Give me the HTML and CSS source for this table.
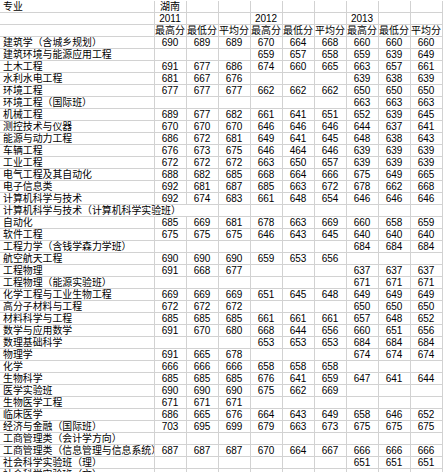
FILE: index.html
```html
<!DOCTYPE html>
<html lang="zh">
<head>
<meta charset="utf-8">
<title>录取分数</title>
<link rel="stylesheet" href="styles.css">
</head>
<body>
<table class="grid">
<colgroup>
<col class="c-name"><col class="c-num"><col class="c-num"><col class="c-num"><col class="c-num"><col class="c-num"><col class="c-num"><col class="c-num"><col class="c-num"><col class="c-num">
</colgroup>
<tbody>
<tr><td class="name">专业</td><td>湖南</td><td></td><td></td><td></td><td></td><td></td><td></td><td></td><td></td></tr>
<tr><td class="name"></td><td>2011</td><td></td><td></td><td>2012</td><td></td><td></td><td>2013</td><td></td><td></td></tr>
<tr><td class="name"></td><td>最高分</td><td>最低分</td><td>平均分</td><td>最高分</td><td>最低分</td><td>平均分</td><td>最高分</td><td>最低分</td><td>平均分</td></tr>
<tr><td class="name">建筑学（含城乡规划）</td><td>690</td><td>689</td><td>689</td><td>670</td><td>664</td><td>668</td><td>660</td><td>660</td><td>660</td></tr>
<tr><td class="name">建筑环境与能源应用工程</td><td></td><td></td><td></td><td>659</td><td>657</td><td>658</td><td>659</td><td>639</td><td>649</td></tr>
<tr><td class="name">土木工程</td><td>691</td><td>677</td><td>686</td><td>674</td><td>660</td><td>665</td><td>663</td><td>657</td><td>661</td></tr>
<tr><td class="name">水利水电工程</td><td>681</td><td>667</td><td>676</td><td></td><td></td><td></td><td>639</td><td>638</td><td>639</td></tr>
<tr><td class="name">环境工程</td><td>677</td><td>677</td><td>677</td><td>662</td><td>662</td><td>662</td><td>650</td><td>650</td><td>650</td></tr>
<tr><td class="name">环境工程（国际班）</td><td></td><td></td><td></td><td></td><td></td><td></td><td>663</td><td>663</td><td>663</td></tr>
<tr><td class="name">机械工程</td><td>689</td><td>677</td><td>682</td><td>661</td><td>641</td><td>651</td><td>652</td><td>639</td><td>645</td></tr>
<tr><td class="name">测控技术与仪器</td><td>670</td><td>670</td><td>670</td><td>646</td><td>646</td><td>646</td><td>644</td><td>637</td><td>641</td></tr>
<tr><td class="name">能源与动力工程</td><td>686</td><td>672</td><td>681</td><td>649</td><td>641</td><td>645</td><td>648</td><td>638</td><td>643</td></tr>
<tr><td class="name">车辆工程</td><td>676</td><td>673</td><td>675</td><td>646</td><td>464</td><td>646</td><td>639</td><td>639</td><td>639</td></tr>
<tr><td class="name">工业工程</td><td>672</td><td>672</td><td>672</td><td>663</td><td>650</td><td>657</td><td>639</td><td>639</td><td>639</td></tr>
<tr><td class="name">电气工程及其自动化</td><td>688</td><td>682</td><td>685</td><td>668</td><td>664</td><td>666</td><td>675</td><td>649</td><td>665</td></tr>
<tr><td class="name">电子信息类</td><td>692</td><td>681</td><td>687</td><td>685</td><td>663</td><td>672</td><td>678</td><td>662</td><td>668</td></tr>
<tr><td class="name">计算机科学与技术</td><td>692</td><td>674</td><td>683</td><td>661</td><td>648</td><td>654</td><td>646</td><td>646</td><td>646</td></tr>
<tr><td class="name over" colspan="3">计算机科学与技术（计算机科学实验班）</td><td></td><td></td><td></td><td></td><td></td><td></td><td></td></tr>
<tr><td class="name">自动化</td><td>685</td><td>669</td><td>681</td><td>678</td><td>663</td><td>669</td><td>660</td><td>658</td><td>659</td></tr>
<tr><td class="name">软件工程</td><td>675</td><td>675</td><td>675</td><td>646</td><td>643</td><td>645</td><td>640</td><td>640</td><td>640</td></tr>
<tr><td class="name">工程力学（含钱学森力学班）</td><td></td><td></td><td></td><td></td><td></td><td></td><td>684</td><td>684</td><td>684</td></tr>
<tr><td class="name">航空航天工程</td><td>690</td><td>690</td><td>690</td><td>659</td><td>653</td><td>656</td><td></td><td></td><td></td></tr>
<tr><td class="name">工程物理</td><td>691</td><td>668</td><td>677</td><td></td><td></td><td></td><td>637</td><td>637</td><td>637</td></tr>
<tr><td class="name">工程物理（能源实验班）</td><td></td><td></td><td></td><td></td><td></td><td></td><td>671</td><td>671</td><td>671</td></tr>
<tr><td class="name">化学工程与工业生物工程</td><td>669</td><td>669</td><td>669</td><td>651</td><td>645</td><td>648</td><td>649</td><td>649</td><td>649</td></tr>
<tr><td class="name">高分子材料与工程</td><td>672</td><td>672</td><td>672</td><td></td><td></td><td></td><td>650</td><td>650</td><td>650</td></tr>
<tr><td class="name">材料科学与工程</td><td>685</td><td>685</td><td>685</td><td>661</td><td>661</td><td>661</td><td>657</td><td>648</td><td>652</td></tr>
<tr><td class="name">数学与应用数学</td><td>691</td><td>670</td><td>680</td><td>668</td><td>644</td><td>656</td><td>660</td><td>651</td><td>656</td></tr>
<tr><td class="name">数理基础科学</td><td></td><td></td><td></td><td>653</td><td>653</td><td>653</td><td>684</td><td>684</td><td>684</td></tr>
<tr><td class="name">物理学</td><td>691</td><td>665</td><td>678</td><td></td><td></td><td></td><td>674</td><td>674</td><td>674</td></tr>
<tr><td class="name">化学</td><td>666</td><td>666</td><td>666</td><td>658</td><td>658</td><td>658</td><td></td><td></td><td></td></tr>
<tr><td class="name">生物科学</td><td>685</td><td>685</td><td>685</td><td>676</td><td>641</td><td>659</td><td>647</td><td>641</td><td>644</td></tr>
<tr><td class="name">医学实验班</td><td>690</td><td>690</td><td>690</td><td>675</td><td>662</td><td>669</td><td></td><td></td><td></td></tr>
<tr><td class="name">生物医学工程</td><td>671</td><td>671</td><td>671</td><td></td><td></td><td></td><td></td><td></td><td></td></tr>
<tr><td class="name">临床医学</td><td>686</td><td>665</td><td>676</td><td>664</td><td>643</td><td>649</td><td>658</td><td>646</td><td>652</td></tr>
<tr><td class="name">经济与金融（国际班）</td><td>703</td><td>695</td><td>699</td><td>679</td><td>663</td><td>673</td><td>675</td><td>675</td><td>675</td></tr>
<tr><td class="name">工商管理类（会计学方向）</td><td></td><td></td><td></td><td></td><td></td><td></td><td></td><td></td><td></td></tr>
<tr><td class="name clip">工商管理类（信息管理与信息系统）</td><td>687</td><td>687</td><td>687</td><td>670</td><td>664</td><td>667</td><td>666</td><td>666</td><td>666</td></tr>
<tr><td class="name">社会科学实验班（理）</td><td></td><td></td><td></td><td></td><td></td><td></td><td>651</td><td>651</td><td>651</td></tr>
<tr><td class="name">社会科学实验班（文）</td><td></td><td></td><td></td><td></td><td></td><td></td><td></td><td></td><td></td></tr>
</tbody>
</table>
</body>
</html>
```

FILE: styles.css
```css
html, body {
  margin: 0;
  padding: 0;
  background: #ffffff;
}

body {
  font-family: "Liberation Sans", "Noto Sans CJK SC", sans-serif;
  color: #000000;
  overflow: hidden;
}

.grid {
  border-collapse: collapse;
  table-layout: fixed;
  width: 442px;
  margin-top: 1px;
}

.c-name {
  width: 154px;
}

.c-num {
  width: 32px;
}

.grid td {
  height: 11px;
  padding: 0;
  border: 1px solid #d2d2d2;
  font-size: 10px;
  line-height: 11px;
  text-align: center;
  white-space: nowrap;
  overflow: hidden;
  vertical-align: middle;
  font-family: "Liberation Sans", "Noto Sans CJK SC", sans-serif;
}

.grid tr:first-child td {
  border-top: none;
}

.grid td:first-child {
  border-left: none;
}

.grid td.name {
  text-align: left;
  padding-left: 3px;
  font-family: "Noto Sans CJK SC", sans-serif;
  font-size: 9.9px;
}

.grid td.over {
  overflow: visible;
}

.grid td.clip {
  overflow: hidden;
}
```
